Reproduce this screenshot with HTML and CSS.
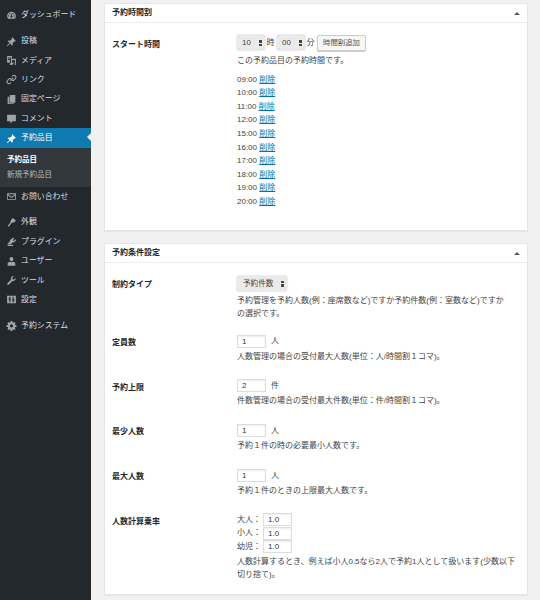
FILE: index.html
```html
<!DOCTYPE html>
<html lang="ja">
<head>
<meta charset="utf-8">
<title>予約品目</title>
<link rel="stylesheet" href="styles.css">
</head>
<body>
<div class="shell">
  <nav class="side">
    <ul class="menu first">
      <li class="item"><svg class="ic" viewBox="0 0 20 20"><path fill-rule="evenodd" d="M10 3a8 8 0 0 0-8 8c0 2 .7 3.800 2 5h12c1.300-1.200 2-3 2-5a8 8 0 0 0-8-8zm-5 9a1.200 1.200 0 1 1 0-2.400A1.200 1.200 0 0 1 5 12zm2-4.200a1.200 1.200 0 1 1 0-2.400 1.200 1.200 0 0 1 0 2.400zM10 14a2 2 0 0 1-1-3.700L10 5l1 5.300A2 2 0 0 1 10 14zm3-6.200a1.200 1.200 0 1 1 0-2.400 1.200 1.200 0 0 1 0 2.400zM15 12a1.200 1.200 0 1 1 0-2.400 1.200 1.200 0 0 1 0 2.400z"/></svg>ダッシュボード</li>
    </ul>
    <ul class="menu">
      <li class="item"><svg class="ic" viewBox="0 0 20 20"><path d="M11 2l7 7-1.500 1-1-.5-3.500 3.500.5 3-1.500 1.500-3.200-3.700L3 18l-1 0 0-1 4.700-4.300L3 9.500 4.500 8l3 .5L11 5l-.5-1z"/></svg>投稿</li>
      <li class="item"><svg class="ic" viewBox="0 0 20 20"><path d="M2 2h9v4H9V4H4v5h3v5H2zM5 5h3v2H5zM9 7h9v11h-2v-9h-5v9H9zm-2 8h2v3H7zM12 13.500a1.800 1.800 0 1 1 0 3.600 1.800 1.800 0 0 1 0-3.600z"/></svg>メディア</li>
      <li class="item"><svg class="ic link-ic" viewBox="0 0 20 20"><path d="M8 12l5-5M11 4.500l1-1a3.500 3.500 0 0 1 5 5l-2 2a3.500 3.500 0 0 1-4.500.5M9 15.500l-1 1a3.500 3.500 0 0 1-5-5l2-2a3.500 3.500 0 0 1 4.500-.5"/></svg>リンク</li>
      <li class="item"><svg class="ic" viewBox="0 0 20 20"><path d="M7 2h10v14H7zM3 5h3v12h8v1H3z"/></svg>固定ページ</li>
      <li class="item"><svg class="ic" viewBox="0 0 20 20"><path d="M3 3h14a1 1 0 0 1 1 1v10a1 1 0 0 1-1 1h-5l-4 4v-4H3a1 1 0 0 1-1-1V4a1 1 0 0 1 1-1z"/></svg>コメント</li>
      <li class="item current"><svg class="ic" viewBox="0 0 20 20"><path d="M11 2l7 7-1.500 1-1-.5-3.500 3.500.5 3-1.500 1.500-3.200-3.700L3 18l-1 0 0-1 4.700-4.300L3 9.500 4.500 8l3 .5L11 5l-.5-1z"/></svg>予約品目<span class="notch"></span></li>
      <li class="sub">
        <div class="sub-on">予約品目</div>
        <div class="sub-off">新規予約品目</div>
      </li>
      <li class="item after-sub"><svg class="ic" viewBox="0 0 20 20"><path d="M2 4h16v12H2zm1.800 2L10 10.500 16.200 6zM3.500 8v6.500h13V8L10 12.500z" fill-rule="evenodd"/></svg>お問い合わせ</li>
    </ul>
    <ul class="menu second">
      <li class="item"><svg class="ic" viewBox="0 0 20 20"><path d="M13 2l5 5-3 3-1-1-2 2-1-1-6 7.500L3 16l5.500-6.500-1-1 2-2-1-1z"/></svg>外観</li>
      <li class="item"><svg class="ic" viewBox="0 0 20 20"><path d="M13 3l2 1.500-2.500 3 2 1.500 2.500-3 1.500 1.500-3 3.500c-1 1-2.500 1-3.500.5L9 15H3v-1.500L7 10c-.3-1 0-2 .8-3zM3 16h10v2H3z"/></svg>プラグイン</li>
      <li class="item"><svg class="ic" viewBox="0 0 20 20"><path d="M10 2a3.500 3.500 0 0 1 3.500 3.500c0 2-1.500 4-3.500 4s-3.500-2-3.500-4A3.500 3.500 0 0 1 10 2zM7 10.500c1.800 1.200 4.200 1.200 6 0 2 .5 4 1.800 4 3.500v3.500H3V14c0-1.700 2-3 4-3.500z"/></svg>ユーザー</li>
      <li class="item"><svg class="ic" viewBox="0 0 20 20"><path d="M17.500 5l-3 3-2.500-.5L11.500 5l3-3a5 5 0 0 0-5.500 6.500L2.500 15a1.800 1.800 0 0 0 2.500 2.500l6.500-6.500A5 5 0 0 0 17.500 5z"/></svg>ツール</li>
      <li class="item"><svg class="ic" viewBox="0 0 20 20"><path d="M2 3h16v14H2zm4 2v3H4.500v2H6v5h2v-5h1V8H8V5zm6 0v5h-1v2h1v3h2v-3h1.500v-2H14V5z" fill-rule="evenodd"/></svg>設定</li>
    </ul>
    <ul class="menu third">
      <li class="item"><svg class="ic" viewBox="0 0 20 20"><path d="M8.500 2h3l.4 2.300 1.500.6 1.900-1.300 2.100 2.100-1.300 1.900.6 1.500 2.300.4v3l-2.300.4-.6 1.500 1.300 1.900-2.100 2.100-1.900-1.300-1.500.6-.4 2.300h-3l-.4-2.300-1.500-.6-1.900 1.300-2.100-2.100 1.300-1.900-.6-1.500-2.300-.4v-3l2.300-.4.600-1.500L2.500 5.700l2.100-2.100 1.900 1.300 1.500-.6zM10 7.500a3 3 0 1 0 0 6 3 3 0 0 0 0-6z" fill-rule="evenodd"/></svg>予約システム</li>
    </ul>
  </nav>
  <main class="main">
    <section class="card first-card">
      <header class="card-head"><h2>予約時間割</h2><span class="toggle"></span></header>
      <div class="card-body">
        <div class="row">
          <div class="label">スタート時間</div>
          <div class="field">
            <div class="inline top">
              <span class="select num">10<span class="updown"></span></span><span class="unit">時</span>
              <span class="select num">00<span class="updown"></span></span><span class="unit">分</span>
              <span class="button">時間割追加</span>
            </div>
            <p class="desc start-desc">この予約品目の予約時間です。</p>
            <ul class="times">
              <li>09:00 <a href="#">削除</a></li>
              <li>10:00 <a href="#">削除</a></li>
              <li>11:00 <a href="#">削除</a></li>
              <li>12:00 <a href="#">削除</a></li>
              <li>15:00 <a href="#">削除</a></li>
              <li>16:00 <a href="#">削除</a></li>
              <li>17:00 <a href="#">削除</a></li>
              <li>18:00 <a href="#">削除</a></li>
              <li>19:00 <a href="#">削除</a></li>
              <li>20:00 <a href="#">削除</a></li>
            </ul>
          </div>
        </div>
      </div>
    </section>
    <section class="card">
      <header class="card-head"><h2>予約条件設定</h2><span class="toggle"></span></header>
      <div class="card-body cond">
        <div class="row">
          <div class="label">制約タイプ</div>
          <div class="field">
            <span class="select type">予約件数<span class="updown"></span></span>
            <p class="desc type-desc">予約管理を予約人数(例：座席数など)ですか予約件数(例：室数など)ですか<br>の選択です。</p>
          </div>
        </div>
        <div class="row">
          <div class="label">定員数</div>
          <div class="field">
            <div class="inline"><span class="input">1</span><span class="unit wide">人</span></div>
            <p class="desc">人数管理の場合の受付最大人数(単位：人/時間割１コマ)。</p>
          </div>
        </div>
        <div class="row">
          <div class="label">予約上限</div>
          <div class="field">
            <div class="inline"><span class="input">2</span><span class="unit wide">件</span></div>
            <p class="desc">件数管理の場合の受付最大件数(単位：件/時間割１コマ)。</p>
          </div>
        </div>
        <div class="row">
          <div class="label">最少人数</div>
          <div class="field">
            <div class="inline"><span class="input">1</span><span class="unit wide">人</span></div>
            <p class="desc">予約１件の時の必要最小人数です。</p>
          </div>
        </div>
        <div class="row">
          <div class="label">最大人数</div>
          <div class="field">
            <div class="inline"><span class="input">1</span><span class="unit wide">人</span></div>
            <p class="desc">予約１件のときの上限最大人数です。</p>
          </div>
        </div>
        <div class="row">
          <div class="label">人数計算乗率</div>
          <div class="field">
            <div class="rates">
              <div class="rate"><span class="rate-name">大人：</span><span class="input small">1.0</span></div>
              <div class="rate"><span class="rate-name">小人：</span><span class="input small">1.0</span></div>
              <div class="rate"><span class="rate-name">幼児：</span><span class="input small">1.0</span></div>
            </div>
            <p class="desc">人数計算するとき、例えば小人0.5なら2人で予約1人として扱います(少数以下<br>切り捨て)。</p>
          </div>
        </div>
      </div>
    </section>
  </main>
</div>
</body>
</html>
```
FILE: styles.css
```css
* { box-sizing: border-box; }
html, body { margin: 0; padding: 0; height: 600px; overflow: hidden; }
body {
  background: #f1f1f1;
  color: #444;
  font-family: "Liberation Sans", "Noto Sans CJK JP", sans-serif;
  font-size: 8px;
  line-height: 13.7px;
}
ul { list-style: none; margin: 0; padding: 0; }
p { margin: 0; }
h2 { margin: 0; font-size: 8px; font-weight: 700; color: #23282d; }
a { color: #0073aa; }

.shell { display: flex; height: 600px; }
.side { width: 91px; flex: none; background: #23282d; color: #dcdfe0; padding-top: 5.5px; }
.menu:nth-child(2) { margin-top: 6.5px; }
.menu.second { margin-top: 6px; }
.menu.third { margin-top: 6.5px; }
.item {
  position: relative;
  display: flex;
  align-items: center;
  height: 19.4px;
  padding-left: 5.5px;
  gap: 4.5px;
  font-size: 7.9px;
  white-space: nowrap;
}
.ic { width: 11px; height: 11px; fill: #a0a5aa; flex: none; }
.link-ic { fill: none; stroke: #a0a5aa; stroke-width: 2; }
.current { background: #0f7ab0; color: #fff; }
.current .ic { fill: #fff; }
.notch {
  position: absolute;
  right: 0;
  top: 5px;
  border: 4.5px solid transparent;
  border-left-width: 0;
  border-right-color: #f1f1f1;
}
.sub { background: #32373c; padding: 4px 0 5.5px 7px; height: 39px; font-size: 7.5px; line-height: 15px; }
.sub-on { color: #fff; font-weight: 700; }
.sub-off { color: #b4b9be; }
.after-sub { margin-top: 0.5px; }

.main { flex: 1; min-width: 0; padding: 3px 12px 0 13px; }
.card { background: #fff; border: 1px solid #e5e5e5; box-shadow: 0 1px 1px rgba(0,0,0,.04); }
.first-card { height: 228px; margin-bottom: 12px; }
.card-head {
  display: flex;
  justify-content: space-between;
  align-items: center;
  height: 19px;
  padding: 0 7px;
  border-bottom: 1px solid #eee;
}
.toggle {
  width: 0;
  height: 0;
  border: 3px solid transparent;
  border-top-width: 0;
  border-bottom: 3.5px solid #555d66;
}
.card-body { padding: 11.5px 7px 0; }
.row { display: flex; }
.label { width: 125px; flex: none; font-weight: 700; color: #23282d; padding-top: 3.5px; }
.field { flex: 1; min-width: 0; }
.inline { display: flex; align-items: center; min-height: 13px; }
.inline.top { min-height: 16px; }
.select {
  position: relative;
  display: inline-block;
  height: 15px;
  line-height: 15px;
  background: #eaeaea;
  border-radius: 3px;
  box-shadow: 0 0 1.5px rgba(0,0,0,.4);
  color: #444;
}
.num { width: 28px; padding-left: 5px; }
.type { width: 50px; padding-left: 6px; font-size: 7.6px; }
.updown {
  position: absolute;
  right: 3.5px;
  top: 4.5px;
  width: 2.5px;
  height: 6px;
  background: linear-gradient(#444 0 2.5px, transparent 2.5px 3.5px, #444 3.5px);
}
.unit { margin: 0 2.5px 0 1.5px; }
.unit.wide { margin-left: 5px; }
.button {
  width: 49px;
  height: 16px;
  line-height: 14px;
  text-align: center;
  border: 1px solid #ccc;
  border-radius: 2px;
  background: #f7f7f7;
  color: #555;
  font-size: 7.4px;
  box-shadow: 0 1px 0 #ccc;
}
.desc { margin-top: 1.5px; }
.start-desc { margin-top: 3px; }
.type-desc { margin-top: 2.5px; }
.times { margin-top: 5.5px; line-height: 13.6px; }
.input {
  display: inline-block;
  width: 29px;
  height: 13px;
  line-height: 11px;
  padding-left: 4px;
  border: 1px solid #ddd;
  box-shadow: inset 0 1px 2px rgba(0,0,0,.07);
  color: #32373c;
  background: #fff;
}
.cond { padding-top: 13px; }
.cond .row { margin-bottom: 15.8px; }
.cond .row:first-child { margin-bottom: 13.5px; }
.cond .row:last-child { margin-bottom: 11.5px; }
.cond .label { padding-top: 1.5px; }
.cond .row:first-child .label { padding-top: 2px; }
.rates { display: flex; flex-direction: column; }
.rate { display: flex; align-items: center; height: 13.3px; }
.rate-name { width: 26px; }
```
